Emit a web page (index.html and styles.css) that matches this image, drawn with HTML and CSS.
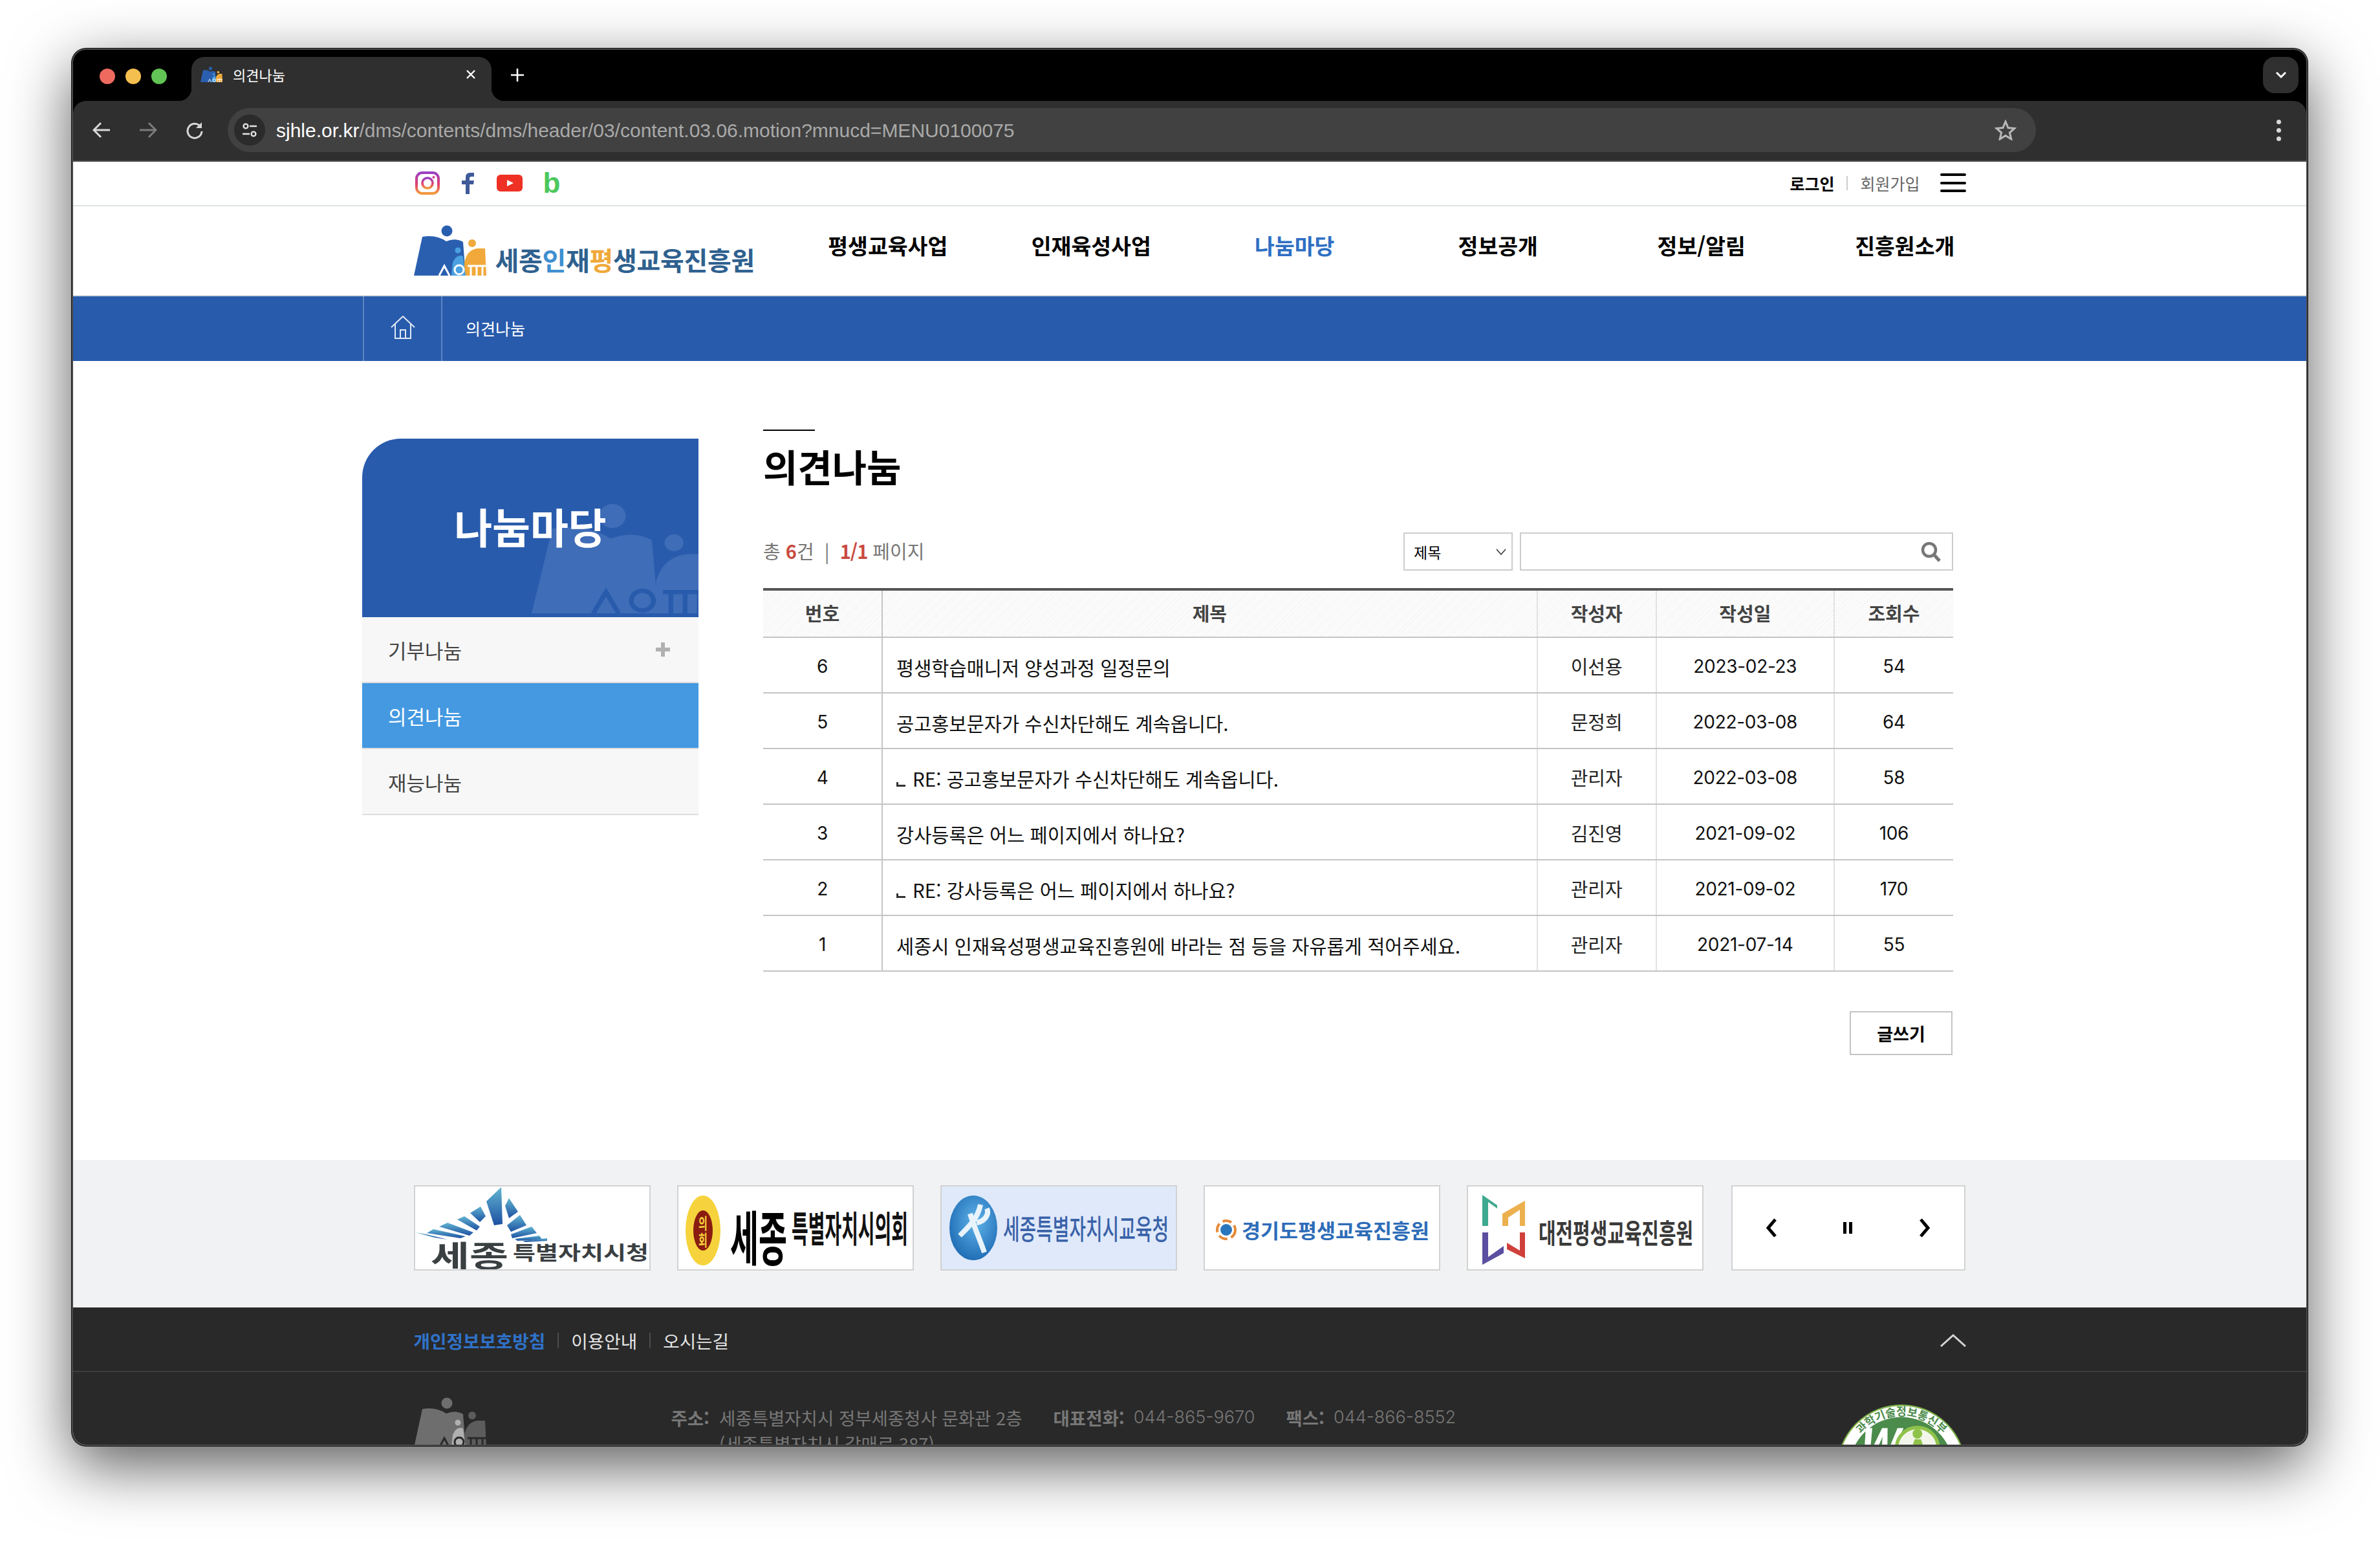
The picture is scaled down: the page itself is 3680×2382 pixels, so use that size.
FILE: index.html
```html
<!DOCTYPE html>
<html lang="ko">
<head>
  <meta charset="UTF-8">
  <title>의견나눔</title>
  <link rel="stylesheet" href="styles.css">
</head>
<body>
  <svg class="defs" width="0" height="0">
    <defs>
      <symbol id="mark" viewBox="0 0 112 78" preserveAspectRatio="none">
        <circle cx="51" cy="9" r="8.5" fill="var(--a)"/>
        <path d="M0 78 L13 18 Q34 14 50 25 Q64 19 76 26 L80 78Z" fill="var(--a)"/>
        <circle cx="90" cy="28" r="6" fill="var(--b)"/>
        <path d="M78 78 L78 58 Q82 38 98 36 L110 36 L112 78Z" fill="var(--b)"/>
        <circle cx="68" cy="39" r="4.5" fill="var(--c)"/>
        <path d="M58 78 L60 58 Q66 44 76 48 L80 78Z" fill="var(--c)"/>
        <path d="M39 78 L47 63 L55 78" fill="none" stroke="var(--d)" stroke-width="3"/>
        <circle cx="70" cy="69" r="7" fill="none" stroke="var(--d)" stroke-width="3"/>
        <path d="M83 63 H112 M88 63 V78 M97 63 V78 M106 63 V78" fill="none" stroke="var(--d)" stroke-width="3"/>
      </symbol>
      <linearGradient id="rays" x1="0" y1="0" x2="0" y2="1">
        <stop offset="0" stop-color="#62b5d2"/>
        <stop offset="1" stop-color="#1d50a2"/>
      </linearGradient>
      <radialGradient id="ball" cx="0.55" cy="0.4" r="0.7">
        <stop offset="0" stop-color="#5fb4ea"/>
        <stop offset="1" stop-color="#1763ae"/>
      </radialGradient>
      <linearGradient id="insta" x1="0" y1="0" x2="0" y2="1">
        <stop offset="0" stop-color="#9a3fc4"/>
        <stop offset="0.55" stop-color="#e0406f"/>
        <stop offset="1" stop-color="#f39a3c"/>
      </linearGradient>
    </defs>
  </svg>

  <div class="window">
    <div class="tabstrip">
      <div class="lights"><i class="red"></i><i class="yellow"></i><i class="green"></i></div>
      <div class="tab">
        <svg class="mark favicon" width="34" height="24"><use href="#mark"/></svg>
        <span class="tab-title">의견나눔</span>
        <svg class="tab-close" width="16" height="16" viewBox="0 0 16 16"><path d="M2 2L14 14M14 2L2 14" stroke="#fff" stroke-width="2.4"/></svg>
      </div>
      <svg class="tab-new" width="22" height="22" viewBox="0 0 22 22"><path d="M11 1V21M1 11H21" stroke="#fff" stroke-width="2.6"/></svg>
      <div class="tab-menu"><svg width="18" height="12" viewBox="0 0 18 12"><path d="M2 2L9 9L16 2" fill="none" stroke="#fff" stroke-width="3"/></svg></div>
    </div>

    <div class="toolbar">
      <svg class="tool-icon" width="28" height="26" viewBox="0 0 28 26"><path d="M27 13H3M13 2L2 13L13 24" fill="none" stroke="#d8d8d8" stroke-width="3"/></svg>
      <svg class="tool-icon" width="28" height="26" viewBox="0 0 28 26"><path d="M1 13H25M15 2L26 13L15 24" fill="none" stroke="#7c7c7c" stroke-width="3"/></svg>
      <svg class="tool-icon" width="28" height="28" viewBox="0 0 28 28"><path d="M23 9A11 11 0 1 0 25 16" fill="none" stroke="#d8d8d8" stroke-width="3"/><path d="M25 2V11H16" fill="#d8d8d8"/></svg>
      <div class="omnibox">
        <div class="site-info">
          <svg width="26" height="26" viewBox="0 0 26 26"><circle cx="7" cy="7" r="3.4" fill="none" stroke="#e4e4e4" stroke-width="2.4"/><path d="M13 7H24M2 19H13" stroke="#e4e4e4" stroke-width="2.6"/><circle cx="19" cy="19" r="3.4" fill="none" stroke="#e4e4e4" stroke-width="2.4"/></svg>
        </div>
        <span class="url"><b>sjhle.or.kr</b>/dms/contents/dms/header/03/content.03.06.motion?mnucd=MENU0100075</span>
        <svg class="star" width="34" height="32" viewBox="0 0 34 32"><path d="M17 3L21 12.6L31 13.4L23.4 20L25.8 30L17 24.6L8.2 30L10.6 20L3 13.4L13 12.6Z" fill="none" stroke="#b8b8b8" stroke-width="3"/></svg>
      </div>
      <div class="kebab"><i></i><i></i><i></i></div>
    </div>

    <div class="page">
      <div class="topbar">
        <div class="wrap topbar-in">
          <div class="socials">
            <svg width="38" height="36" viewBox="0 0 38 36"><rect x="2" y="2" width="34" height="32" rx="9" fill="none" stroke="url(#insta)" stroke-width="4"/><circle cx="19" cy="18" r="8" fill="none" stroke="url(#insta)" stroke-width="3.6"/><circle cx="28.5" cy="9" r="2" fill="#d0408c"/></svg>
            <svg width="20" height="34" viewBox="0 0 20 34"><path d="M6 34V19H0V13H6V8Q6 1 13 1H19V7H15Q12 7 12 10V13H19L18 19H12V34Z" fill="#3f5a99"/></svg>
            <svg width="40" height="26" viewBox="0 0 40 26"><rect width="40" height="26" rx="6" fill="#ee3124"/><path d="M16 8L26 13L16 18Z" fill="#fff"/></svg>
            <span class="blog">b</span>
          </div>
          <div class="member">
            <a class="login">로그인</a><i class="sep"></i><a class="join">회원가입</a>
            <div class="burger"><i></i><i></i><i></i></div>
          </div>
        </div>
      </div>

      <header class="head">
        <div class="wrap head-in">
          <a class="logo">
            <svg class="mark" width="112" height="78"><use href="#mark"/></svg>
            <span class="logo-text">세종<em class="c-sky">인</em>재<em class="c-orange">평</em>생교육진흥원</span>
          </a>
          <nav class="gnb">
            <a>평생교육사업</a>
            <a>인재육성사업</a>
            <a class="on">나눔마당</a>
            <a>정보공개</a>
            <a>정보/알림</a>
            <a>진흥원소개</a>
          </nav>
        </div>
      </header>

      <div class="crumb">
        <div class="sub-wrap crumb-in">
          <div class="crumb-home">
            <svg width="38" height="36" viewBox="0 0 38 36"><path d="M1 18L19 1L37 18M7 13V35H31V13M15 35V22H23V35" fill="none" stroke="#dfe8f6" stroke-width="2"/></svg>
          </div>
          <span class="crumb-text">의견나눔</span>
        </div>
      </div>

      <main class="sub-wrap content">
        <aside class="side">
          <div class="side-head">
            <svg class="mark side-mark" width="274" height="170"><use href="#mark"/></svg>
            <h2>나눔마당</h2>
          </div>
          <ul class="side-menu">
            <li><span>기부나눔</span><svg width="22" height="22" viewBox="0 0 22 22"><path d="M11 0V22M0 11H22" stroke="#b0b0b0" stroke-width="6"/></svg></li>
            <li class="on"><span>의견나눔</span></li>
            <li><span>재능나눔</span></li>
          </ul>
        </aside>

        <section class="board">
          <div class="title-rule"></div>
          <h1>의견나눔</h1>

          <div class="board-tools">
            <p class="count">총 <b>6</b>건 <i>|</i> <b class="pages">1/1</b> 페이지</p>
            <div class="search">
              <div class="search-type">
                <span>제목</span>
                <svg width="16" height="10" viewBox="0 0 16 10"><path d="M1 1L8 9L15 1" fill="none" stroke="#333" stroke-width="1.5"/></svg>
              </div>
              <div class="search-box">
                <input type="text">
                <svg width="32" height="32" viewBox="0 0 32 32"><circle cx="13" cy="13" r="10" fill="none" stroke="#777" stroke-width="4.5"/><path d="M20 20L29 30" stroke="#777" stroke-width="5"/></svg>
              </div>
            </div>
          </div>

          <table class="list">
            <thead>
              <tr><th class="w-no">번호</th><th class="w-title">제목</th><th class="w-no">작성자</th><th class="w-date">작성일</th><th class="w-no">조회수</th></tr>
            </thead>
            <tbody>
              <tr><td class="num">6</td><td class="subject">평생학습매니저 양성과정 일정문의</td><td>이선용</td><td class="num">2023-02-23</td><td class="num">54</td></tr>
              <tr><td class="num">5</td><td class="subject">공고홍보문자가 수신차단해도 계속옵니다.</td><td>문정희</td><td class="num">2022-03-08</td><td class="num">64</td></tr>
              <tr><td class="num">4</td><td class="subject"><i class="re"></i>RE: 공고홍보문자가 수신차단해도 계속옵니다.</td><td>관리자</td><td class="num">2022-03-08</td><td class="num">58</td></tr>
              <tr><td class="num">3</td><td class="subject">강사등록은 어느 페이지에서 하나요?</td><td>김진영</td><td class="num">2021-09-02</td><td class="num">106</td></tr>
              <tr><td class="num">2</td><td class="subject"><i class="re"></i>RE: 강사등록은 어느 페이지에서 하나요?</td><td>관리자</td><td class="num">2021-09-02</td><td class="num">170</td></tr>
              <tr><td class="num">1</td><td class="subject">세종시 인재육성평생교육진흥원에 바라는 점 등을 자유롭게 적어주세요.</td><td>관리자</td><td class="num">2021-07-14</td><td class="num">55</td></tr>
            </tbody>
          </table>

          <div class="board-foot"><a class="btn-write">글쓰기</a></div>
        </section>
      </main>

      <div class="banners">
        <div class="wrap banner-row">
          <a class="banner">
            <svg viewBox="0 0 362 128">
              <g fill="url(#rays)">
                <path d="M133 1L135 58L122 60L110 23Z"/>
                <path d="M145 18L159 39L145 49L139 30Z"/>
                <path d="M101 31L85 41L100 55L109 46Z"/>
                <path d="M76 46L65 51L95 68L100 62Z"/>
                <path d="M162 44L172 60L148 70L142 60Z"/>
                <path d="M50 56L37 62L84 76L90 71Z"/>
                <path d="M180 62L188 72L150 80L148 74Z"/>
                <path d="M28 66L18 72L70 80L78 77Z"/>
                <path d="M192 76L196 82L158 84L154 81Z"/>
                <path d="M0 71L18 74L50 82L30 79Z"/>
                <path d="M204 80L204 84L170 86L166 84Z"/>
              </g>
              <text class="t-bold" x="24" y="124" font-size="46" fill="#3a3f42" textLength="120" lengthAdjust="spacingAndGlyphs">세종</text>
              <text class="t-bold" x="151" y="113" font-size="30" fill="#3a3f42" textLength="210" lengthAdjust="spacingAndGlyphs">특별자치시청</text>
            </svg>
          </a>
          <a class="banner">
            <svg viewBox="0 0 362 128">
              <ellipse cx="38" cy="68" rx="27" ry="54" fill="#f6d33c"/>
              <ellipse cx="38" cy="68" rx="15" ry="31" fill="#8a1c10"/>
              <text class="t-bold" font-size="15" fill="#f6d33c" text-anchor="middle" transform="translate(38 66) scale(1 1.6)">의</text>
              <text class="t-bold" font-size="15" fill="#f6d33c" text-anchor="middle" transform="translate(38 92) scale(1 1.6)">회</text>
              <text class="t-bold" font-size="48" fill="#000" textLength="88" lengthAdjust="spacingAndGlyphs" transform="translate(80 114) scale(1 1.9)">세종</text>
              <text class="t-bold" font-size="34" fill="#111" textLength="180" lengthAdjust="spacingAndGlyphs" transform="translate(175 86) scale(1 1.65)">특별자치시의회</text>
            </svg>
          </a>
          <a class="banner banner-sky">
            <svg viewBox="0 0 362 128">
              <ellipse cx="49" cy="64" rx="37" ry="50" fill="url(#ball)"/>
              <path d="M60 28C56 50 40 64 28 76M44 42C50 62 60 84 66 102M70 34C74 44 66 54 54 56" fill="none" stroke="#e8f3fb" stroke-width="8"/>
              <text class="t-med" font-size="30" fill="#3a62a8" textLength="256" lengthAdjust="spacingAndGlyphs" transform="translate(95 82) scale(1 1.45)">세종특별자치시교육청</text>
            </svg>
          </a>
          <a class="banner">
            <svg viewBox="0 0 362 128">
              <circle cx="33" cy="67" r="14" fill="none" stroke="#e58a3a" stroke-width="4" stroke-dasharray="14 6"/>
              <circle cx="33" cy="67" r="9" fill="#2a76bd"/>
              <text class="t-bold" x="57" y="80" font-size="31" fill="#2e6db8" textLength="290" lengthAdjust="spacingAndGlyphs">경기도평생교육진흥원</text>
            </svg>
          </a>
          <a class="banner">
            <svg viewBox="0 0 362 128">
              <path d="M22 13L45 29V34L31 24V61H22Z" fill="#3fa98f"/>
              <path d="M88 22V61H80V36L62 48V61H53V42Z" fill="#ecb04e"/>
              <path d="M22 71H31V109L55 92V103L22 121Z" fill="#5a4fa0"/>
              <path d="M88 71V111L60 97V87L80 99V71Z" fill="#d0403a"/>
              <text class="t-bold" font-size="30" fill="#3a3a3a" textLength="239" lengthAdjust="spacingAndGlyphs" transform="translate(109 88) scale(1 1.42)">대전평생교육진흥원</text>
            </svg>
          </a>
          <div class="banner-ctrl">
            <svg width="20" height="30" viewBox="0 0 20 30"><path d="M16 2L5 15L16 28" fill="none" stroke="#000" stroke-width="5"/></svg>
            <svg width="16" height="18" viewBox="0 0 16 18"><path d="M1 0H6V18H1ZM10 0H15V18H10Z" fill="#000"/></svg>
            <svg width="20" height="30" viewBox="0 0 20 30"><path d="M4 2L15 15L4 28" fill="none" stroke="#000" stroke-width="5"/></svg>
          </div>
        </div>
      </div>

      <footer class="foot">
        <div class="foot-links">
          <div class="wrap foot-links-in">
            <div class="foot-menu">
              <a class="privacy">개인정보보호방침</a><i></i><a>이용안내</a><i></i><a>오시는길</a>
            </div>
            <svg width="40" height="20" viewBox="0 0 40 20"><path d="M1 19L20 2L39 19" fill="none" stroke="#d4d4d4" stroke-width="3"/></svg>
          </div>
        </div>
        <div class="wrap foot-info">
          <svg class="mark foot-mark" width="112" height="78"><use href="#mark"/></svg>
          <div class="address">
            <b>주소:</b>
            <p>세종특별자치시 정부세종청사 문화관 2층<br>(세종특별자치시 갈매로 387)</p>
          </div>
          <div class="contact"><b>대표전화:</b><span>044-865-9670</span><b>팩스:</b><span>044-866-8552</span></div>
          <svg class="wa" width="200" height="200" viewBox="0 0 186 186">
            <defs><path id="wa-arc" d="M16 93A77 77 0 0 1 170 93"/></defs>
            <circle cx="93" cy="93" r="92" fill="#fff" stroke="#7fb34a" stroke-width="2"/>
            <circle cx="93" cy="93" r="75" fill="#4b8b4b"/>
            <text class="t-bold" font-size="16" fill="#4b8b4b" text-anchor="middle"><textPath href="#wa-arc" startOffset="50%">과학기술정보통신부</textPath></text>
            <text class="t-bold wa-text" x="29" y="80" font-size="62" font-style="italic" fill="#fff">WA</text>
            <circle cx="116" cy="63" r="30" fill="#f2f6ea" stroke="#8fc24a" stroke-width="5"/>
            <circle cx="116" cy="42" r="7" fill="#8fc24a"/>
            <path d="M103 78L112 50H121L131 78Z" fill="#8fc24a"/>
          </svg>
        </div>
      </footer>
    </div>
  </div>
</body>
</html>
```

FILE: styles.css
```css
* {
  box-sizing: border-box;
}

html, body {
  margin: 0;
  height: 100%;
}

body {
  width: 3680px;
  height: 2382px;
  padding: 75px 0 0 111px;
  background-color: #fff;
  font-family: "Noto Sans CJK KR", "Noto Sans", sans-serif;
  color: #000;
  overflow: hidden;
}

.defs {
  position: absolute;
}

ul, h1, h2, p {
  margin: 0;
  padding: 0;
}

i, em {
  font-style: normal;
}

a {
  color: inherit;
  text-decoration: none;
}

svg {
  display: block;
  flex: none;
}

.t-bold {
  font-weight: 700;
}

.t-med {
  font-weight: 500;
}

.mark {
  --a: #2a5fb0;
  --b: #f0a93a;
  --c: #4aa0e0;
  --d: #fff;
}

/* browser frame */
.window {
  width: 3457px;
  height: 2160px;
  display: flex;
  flex-direction: column;
  background-color: #000;
  border: 2px solid #4a4a4a;
  border-radius: 22px;
  overflow: hidden;
  box-shadow: 0 0 0 1px #111, 0 30px 95px rgba(0, 0, 0, 0.65);
}

.tabstrip {
  height: 79px;
  flex: none;
  display: flex;
  align-items: flex-start;
  padding: 11px 12px 0 41px;
}

.lights {
  display: flex;
  gap: 16px;
  width: 142px;
  padding-top: 18px;
}

.lights i {
  width: 24px;
  height: 24px;
  border-radius: 50%;
}

.lights .red { background-color: #ee6a5f; }
.lights .yellow { background-color: #f5bf4f; }
.lights .green { background-color: #61c454; }

.tab {
  position: relative;
  width: 464px;
  height: 68px;
  display: flex;
  align-items: center;
  padding: 0 24px 14px 14px;
  background-color: #2f2f2f;
  border-radius: 20px 20px 0 0;
}

.tab::before,
.tab::after {
  content: "";
  position: absolute;
  bottom: 0;
  width: 20px;
  height: 20px;
}

.tab::before {
  left: -20px;
  background: radial-gradient(circle at 0 0, #000 20px, #2f2f2f 20.5px);
}

.tab::after {
  right: -20px;
  background: radial-gradient(circle at 100% 0, #000 20px, #2f2f2f 20.5px);
}

.favicon {
  margin-right: 16px;
}

.tab-title {
  flex: 1;
  font-size: 22px;
  color: #fff;
}

.tab-new {
  margin: 17px 0 0 29px;
}

.tab-menu {
  margin-left: auto;
  width: 55px;
  height: 56px;
  display: flex;
  align-items: center;
  justify-content: center;
  background-color: #2f2f2f;
  border-radius: 18px;
}

.toolbar {
  height: 94px;
  flex: none;
  display: flex;
  align-items: center;
  gap: 44px;
  padding: 0 0 2px 30px;
  background-color: #2f2f2f;
  border-bottom: 2px solid #4c4c4c;
  border-radius: 20px 20px 0 0;
}

.omnibox {
  width: 2796px;
  height: 68px;
  display: flex;
  align-items: center;
  margin-left: -7px;
  padding: 0 30px 0 10px;
  background-color: #414141;
  border-radius: 34px;
}

.site-info {
  width: 48px;
  height: 48px;
  display: flex;
  align-items: center;
  justify-content: center;
  background-color: #2b2b2b;
  border-radius: 50%;
}

.url {
  flex: 1;
  margin: 2px 0 0 17px;
  font-family: "Liberation Sans", sans-serif;
  font-size: 30px;
  color: #a9a9a9;
}

.url b {
  font-weight: 400;
  color: #fff;
}

.kebab {
  display: flex;
  flex-direction: column;
  gap: 6px;
  margin-left: 328px;
}

.kebab i {
  width: 7px;
  height: 7px;
  background-color: #d8d8d8;
  border-radius: 50%;
}

/* page */
.page {
  flex: 1;
  min-height: 0;
  background-color: #fff;
  overflow: hidden;
}

.wrap {
  width: 2400px;
  margin: 0 auto;
}

.sub-wrap {
  width: 2460px;
  margin-left: 447px;
}

.topbar {
  height: 69px;
  border-bottom: 2px solid #dde2e6;
}

.topbar-in {
  height: 100%;
  display: flex;
  align-items: center;
  justify-content: space-between;
}

.socials {
  display: flex;
  align-items: center;
  gap: 34px;
  margin: -2px 0 0 2px;
}

.socials .blog {
  margin-left: -2px;
  font-family: "Liberation Sans", sans-serif;
  font-size: 44px;
  line-height: 36px;
  font-weight: 700;
  color: #4cc75c;
}

.member {
  display: flex;
  align-items: center;
  font-size: 25px;
  margin-top: -2px;
}

.login {
  font-weight: 700;
}

.member .sep {
  width: 2px;
  height: 22px;
  margin: 0 19px;
  background-color: #ccc;
}

.join {
  color: #666;
}

.burger {
  display: flex;
  flex-direction: column;
  gap: 8.5px;
  margin-left: 31px;
}

.burger i {
  width: 40px;
  height: 4px;
  background-color: #000;
  border-radius: 2px;
}

.head {
  height: 139px;
  border-bottom: 2px solid #d5dade;
}

.head-in {
  height: 100%;
  display: flex;
}

.logo {
  width: 576px;
  flex: none;
  display: flex;
  align-items: flex-start;
  padding-top: 29px;
}

.logo-text {
  margin: 26px 0 0 14px;
  font-size: 40px;
  line-height: 54px;
  font-weight: 700;
  letter-spacing: -0.3px;
  color: #2f618f;
  white-space: nowrap;
}

.c-sky { color: #3f8fd0; }
.c-orange { color: #f0a93a; }

.gnb {
  flex: none;
  display: grid;
  grid-template-columns: repeat(6, 314.5px);
  padding-bottom: 19px;
}

.gnb a {
  align-self: center;
  text-align: center;
  font-size: 33.5px;
  font-weight: 700;
}

.gnb a.on {
  color: #2f6fc4;
}

.crumb {
  height: 100px;
  background-color: #285bac;
}

.crumb-in {
  height: 100%;
  display: flex;
  align-items: center;
}

.crumb-home {
  width: 123px;
  height: 100%;
  display: flex;
  align-items: center;
  justify-content: center;
  margin-left: 1px;
  padding-bottom: 4px;
  border-left: 2px solid rgba(255, 255, 255, 0.25);
  border-right: 2px solid rgba(255, 255, 255, 0.25);
}

.crumb-text {
  margin: -2px 0 0 36px;
  font-size: 25px;
  color: #fff;
}

/* content */
.content {
  height: 1235px;
  display: flex;
  gap: 100px;
  padding-top: 106px;
}

.side {
  width: 520px;
  flex: none;
  padding-top: 14px;
}

.side-head {
  position: relative;
  height: 276px;
  padding-top: 92px;
  background-color: #285bac;
  border-radius: 60px 0 0 0;
  overflow: hidden;
}

.side-mark {
  position: absolute;
  left: 262px;
  top: 100px;
  --a: #3f6db7;
  --b: #3f6db7;
  --c: #3f6db7;
  --d: #285bac;
}

.side-head h2 {
  position: relative;
  text-align: center;
  font-size: 64px;
  line-height: 84px;
  font-weight: 700;
  color: #fff;
}

.side-menu {
  list-style: none;
}

.side-menu li {
  height: 102px;
  display: flex;
  align-items: center;
  justify-content: space-between;
  padding: 0 44px 0 40px;
  font-size: 31px;
  color: #444;
  background-color: #f7f7f7;
  border-bottom: 2px solid #dedede;
}

.side-menu li.on {
  color: #fff;
  background-color: #4499e1;
}

.board {
  width: 1840px;
}

.title-rule {
  width: 80px;
  height: 2px;
  background-color: #000;
}

.board h1 {
  margin-top: 12px;
  font-size: 58px;
  line-height: 84px;
  font-weight: 700;
}

.board-tools {
  height: 59px;
  margin-top: 61px;
  display: flex;
  align-items: center;
  justify-content: space-between;
}

.count {
  margin-top: -3px;
  font-size: 29px;
  color: #777;
}

.count b {
  color: #c94a3f;
}

.count i {
  margin: 0 8px;
}

.count .pages {
  letter-spacing: -1px;
}

.search {
  display: flex;
  gap: 11px;
  height: 100%;
}

.search-type {
  width: 169px;
  display: flex;
  align-items: center;
  justify-content: space-between;
  padding: 0 8px 0 14px;
  font-size: 23px;
  background-color: #fff;
  border: 2px solid #ccc;
}

.search-box {
  width: 670px;
  display: flex;
  align-items: center;
  padding-right: 16px;
  border: 2px solid #ccc;
}

.search-box input {
  flex: 1;
  min-width: 0;
  height: 100%;
  border: none;
  outline: none;
  background: none;
}

.list {
  width: 100%;
  margin-top: 27px;
  border-collapse: collapse;
  table-layout: fixed;
  border-top: 4px solid #555;
}

.w-no { width: 184px; }
.w-title { width: 1012px; }
.w-date { width: 275px; }

.list th {
  height: 74px;
  padding-bottom: 4px;
  font-size: 29px;
  font-weight: 700;
  color: #444;
  background: repeating-linear-gradient(-45deg, #f4f4f4 0, #f4f4f4 1px, #fcfcfc 1px, #fcfcfc 4px);
  border-bottom: 2px solid #c4c4c4;
  border-left: 2px solid #e2e2e2;
}

.list td {
  height: 86px;
  padding-top: 2px;
  text-align: center;
  font-size: 29px;
  color: #222;
  border-bottom: 2px solid #c4c4c4;
  border-left: 2px solid #e2e2e2;
}

.list th:first-child,
.list td:first-child {
  border-left: none;
}

.list th:nth-child(2),
.list td:nth-child(2) {
  border-left-color: #c4c4c4;
}

.list td.num {
  padding-top: 4px;
  font-family: Inter, "Noto Sans", sans-serif;
  font-size: 28px;
  font-weight: 400;
  letter-spacing: -0.3px;
  color: #111;
}

.list td.subject {
  padding: 6px 0 0 21px;
  text-align: left;
  font-size: 29.5px;
  color: #111;
}

.re {
  display: inline-block;
  width: 14px;
  height: 7px;
  margin-right: 11px;
  border-left: 3px solid #333;
  border-bottom: 3px solid #333;
}

.board-foot {
  display: flex;
  justify-content: flex-end;
  margin-top: 61px;
}

.btn-write {
  width: 159px;
  height: 68px;
  display: flex;
  align-items: center;
  justify-content: center;
  font-size: 27px;
  font-weight: 700;
  border: 2px solid #c4c4c4;
  margin-right: 1px;
}

/* banners */
.banners {
  height: 228px;
  padding-top: 39px;
  background-color: #f1f2f4;
}

.banner-row {
  display: flex;
  gap: 41px;
}

.banner {
  width: 366px;
  height: 132px;
  flex: none;
  background-color: #fff;
  border: 2px solid #d2d2d2;
}

.banner-sky {
  background-color: #dfe9fa;
}

.banner svg {
  width: 100%;
  height: 100%;
}

.banner-ctrl {
  width: 362px;
  height: 132px;
  margin-left: 2px;
  display: flex;
  align-items: center;
  justify-content: space-around;
  background-color: #fff;
  border: 2px solid #d2d2d2;
}

/* footer */
.foot {
  height: 400px;
  background-color: #292929;
}

.foot-links {
  height: 100px;
  border-bottom: 2px solid #3c3c3c;
}

.foot-links-in {
  height: 100%;
  display: flex;
  align-items: center;
  justify-content: space-between;
  padding-top: 4px;
}

.foot-menu {
  display: flex;
  align-items: center;
  font-size: 27.7px;
  color: #e4e4e4;
}

.foot-menu i {
  width: 2px;
  height: 24px;
  margin: 0 19px;
  background-color: #4c4c4c;
}

.foot-menu .privacy {
  font-weight: 700;
  color: #2f72c9;
}

.foot-info {
  display: flex;
  align-items: flex-start;
  padding-top: 39px;
  color: #777;
  font-size: 27.5px;
  line-height: 40px;
}

.foot-mark {
  --a: #6e6e6e;
  --b: #5c5c5c;
  --c: #b0b0b0;
  --d: #292929;
}

.address {
  display: flex;
  gap: 15px;
  margin: 11px 0 0 286px;
}

.address p {
  white-space: nowrap;
}

.contact {
  display: flex;
  margin: 11px 0 0 48px;
  white-space: nowrap;
}

.contact span {
  margin: 0 48px 0 14px;
  font-family: Inter, "Noto Sans", sans-serif;
  font-size: 27px;
  font-weight: 300;
}

.wa {
  margin: 11px 0 0 auto;
}
```
